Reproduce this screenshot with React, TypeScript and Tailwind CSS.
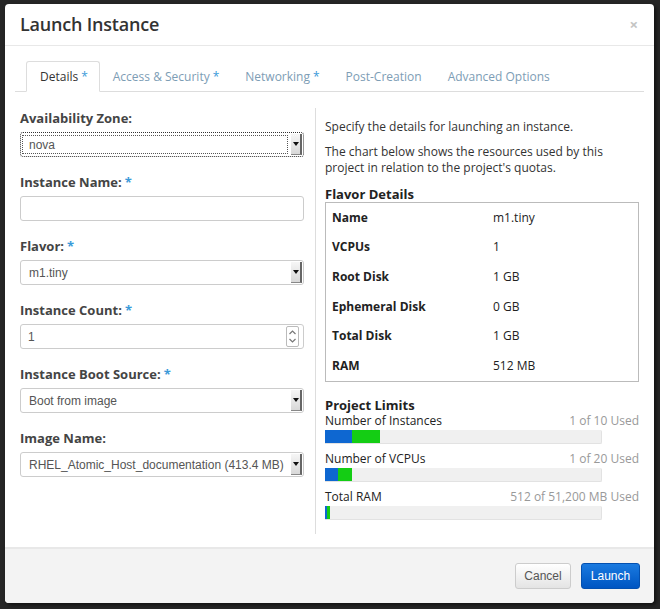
const sans = { fontFamily: '"Open Sans", "Noto Sans", sans-serif' };
const arial = { fontFamily: '"Liberation Sans", Arial, sans-serif' };

function Star() {
  return <span className="text-[#3b9ad9] ml-[3px]">*</span>;
}

function Label({ text, required }: { text: string; required?: boolean }) {
  return (
    <div className="h-[18px] leading-[18px] text-[13px] font-bold text-[#444] mb-[5px]">
      {text}
      {required && <Star />}
    </div>
  );
}

function Arrow() {
  return (
    <div className="w-[11px] shrink-0 self-stretch my-px mr-px bg-gradient-to-b from-[#f6f6f6] to-[#d8d8d8] border-r-2 border-r-[#666] border-b border-b-[#888] flex items-center justify-center">
      <div className="w-0 h-0 border-l-[3px] border-r-[3px] border-t-[4px] border-l-transparent border-r-transparent border-t-[#111]" />
    </div>
  );
}

function Select({ value, focused }: { value: string; focused?: boolean }) {
  return (
    <div
      className={
        "h-[25px] flex items-stretch bg-white rounded-[3px] " +
        (focused ? "border border-dotted border-[#333]" : "border border-[#ccc]")
      }
      style={arial}
    >
      <div className="flex-1 min-w-0 flex items-center py-[2px] pl-[1px] pr-[3px]">
        <div
          className={
            "flex-1 h-full flex items-center text-[12px] text-[#555] whitespace-nowrap overflow-hidden " +
            (focused ? "border border-dotted border-[#555] pl-[6px]" : "pl-[7px]")
          }
        >
          {value}
        </div>
      </div>
      <Arrow />
    </div>
  );
}

function Field({ label, required, children }: { label: string; required?: boolean; children: React.ReactNode }) {
  return (
    <div className="mb-[16px]">
      <Label text={label} required={required} />
      {children}
    </div>
  );
}

function Bar({ label, used, blue, green }: { label: string; used: string; blue: number; green: number }) {
  return (
    <div className="mb-[7px]">
      <div className="flex justify-between h-[16px] leading-[16px] text-[12px]">
        <span className="text-[#222]">{label}</span>
        <span className="text-[#999]">{used}</span>
      </div>
      <div className="mt-px h-[14px] w-[277px] bg-[#f0f0f0] border-r border-b border-[#e2e2e2] rounded-r-[2px] flex">
        <div className="h-full bg-[#0e67d1]" style={{ width: blue }} />
        <div className="h-full bg-[#14cd14]" style={{ width: green }} />
      </div>
    </div>
  );
}

const flavor: [string, string][] = [
  ["Name", "m1.tiny"],
  ["VCPUs", "1"],
  ["Root Disk", "1 GB"],
  ["Ephemeral Disk", "0 GB"],
  ["Total Disk", "1 GB"],
  ["RAM", "512 MB"],
];

const tabs = [
  { name: "Details", star: true },
  { name: "Access & Security", star: true },
  { name: "Networking", star: true },
  { name: "Post-Creation", star: false },
  { name: "Advanced Options", star: false },
];

export default function App() {
  return (
    <div className="w-[660px] h-[609px] bg-[#262626] pl-[5px] pt-[4px] overflow-hidden" style={sans}>
      <div className="w-[649px] h-[599px] bg-white rounded-[4px] flex flex-col shadow-[2px_2px_4px_rgba(0,0,0,0.6)]">
        {/* Header */}
        <div className="h-[42px] px-[15px] flex items-center justify-between border-b border-[#e8e8e8]">
          <h1 className="text-[18px] font-semibold text-[#333] tracking-[-0.2px]">Launch Instance</h1>
          <span className="text-[15px] font-bold text-[#c4c4c4] mr-[1px]">×</span>
        </div>

        {/* Tabs */}
        <div className="mt-[15px] mx-[10px] border-b border-[#ddd] flex pl-[11px] h-[31px]">
          {tabs.map((t, i) => (
            <div
              key={t.name}
              className={
                "text-[12px] pt-px flex items-center rounded-t-[3px] " +
                (i === 0
                  ? "pl-[13px] pr-[11px] bg-white border border-[#ddd] border-b-white -mb-px text-[#333]"
                  : "px-[13px] text-[#7d9db5]")
              }
            >
              {t.name}
              {t.star && <Star />}
            </div>
          ))}
        </div>

        {/* Body */}
        <div className="flex-1 flex px-[15px] pt-[16px] pb-[13px]">
          <div className="w-[285px] pt-px">
            <Field label="Availability Zone:">
              <Select value="nova" focused />
            </Field>
            <Field label="Instance Name:" required>
              <div className="h-[25px] border border-[#ccc] rounded-[3px] bg-white" />
            </Field>
            <Field label="Flavor:" required>
              <Select value="m1.tiny" />
            </Field>
            <Field label="Instance Count:" required>
              <div className="h-[25px] border border-[#ccc] rounded-[3px] bg-white flex items-center pl-[7px] pr-[4px]" style={arial}>
                <span className="flex-1 text-[12px] text-[#555]">1</span>
                <div className="w-[13px] h-[21px] border border-[#bbb] rounded-[2px] flex flex-col items-center justify-center text-[#777]">
                  <svg width="7" height="5" viewBox="0 0 7 5"><path d="M0.5 4 L3.5 1 L6.5 4" fill="none" stroke="#777" strokeWidth="1.2" /></svg>
                  <svg width="7" height="5" viewBox="0 0 7 5" className="mt-[3px]"><path d="M0.5 1 L3.5 4 L6.5 1" fill="none" stroke="#777" strokeWidth="1.2" /></svg>
                </div>
              </div>
            </Field>
            <Field label="Instance Boot Source:" required>
              <Select value="Boot from image" />
            </Field>
            <Field label="Image Name:">
              <Select value="RHEL_Atomic_Host_documentation (413.4 MB)" />
            </Field>
          </div>

          <div className="ml-[11px] border-l border-[#ddd] pl-[9px] w-[324px] pt-[11px]">
            <p className="text-[12px] leading-[16px] text-[#333]">Specify the details for launching an instance.</p>
            <p className="text-[12px] leading-[16px] text-[#333] mt-[9px] w-[290px]">
              The chart below shows the resources used by this project in relation to the project's quotas.
            </p>
            <h3 className="mt-[10px] text-[13px] font-bold leading-[16px] text-[#222]">Flavor Details</h3>
            <div className="w-[314px] border border-[#bbb]">
              {flavor.map(([k, v]) => (
                <div key={k} className="h-[29.6px] flex items-center text-[12px] text-[#222]">
                  <span className="w-[167px] pl-[6px] font-bold">{k}</span>
                  <span>{v}</span>
                </div>
              ))}
            </div>
            <h3 className="mt-[15px] text-[13px] font-bold leading-[16px] text-[#222]">Project Limits</h3>
            <div className="w-[314px]">
              <Bar label="Number of Instances" used="1 of 10 Used" blue={27} green={28} />
              <Bar label="Number of VCPUs" used="1 of 20 Used" blue={13} green={14} />
              <Bar label="Total RAM" used="512 of 51,200 MB Used" blue={2} green={3} />
            </div>
          </div>
        </div>

        {/* Footer */}
        <div className="h-[56px] border-t-2 border-[#e8e8e8] bg-[#f3f3f3] rounded-b-[4px] flex items-center justify-end gap-[10px] pr-[14px]" style={arial}>
          <button className="h-[26px] w-[56px] rounded-[3px] border border-[#ccc] bg-gradient-to-b from-white to-[#e4e4e4] text-[12px] text-[#555]">
            Cancel
          </button>
          <button className="h-[26px] w-[59px] rounded-[3px] border border-[#0350b0] bg-gradient-to-b from-[#1a7ae0] to-[#0055c2] text-[12px] text-white">
            Launch
          </button>
        </div>
      </div>
    </div>
  );
}
